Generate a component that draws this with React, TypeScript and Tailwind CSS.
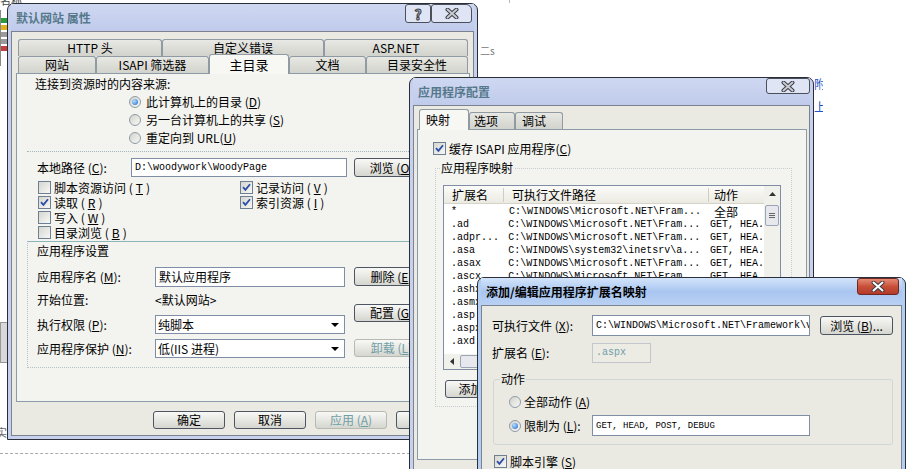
import type { ReactNode } from 'react'

const MONO = "font-['Liberation_Mono',monospace]"

function Key({ text, k, tail = '' }: { text: string; k: string; tail?: string }) {
  return (
    <>
      {text}(<span className="underline">{k}</span>){tail}
    </>
  )
}

function Check({ on }: { on?: boolean }) {
  return (
    <span className="inline-flex h-[13px] w-[13px] shrink-0 items-center justify-center border border-[#6f7f93] bg-linear-to-br from-[#d6d6d0] to-[#f7f7f5]">
      {on && (
        <svg width="9" height="9" viewBox="0 0 9 9">
          <path d="M1 4.2 L3.4 6.8 L8 1.2" fill="none" stroke="#2b4da6" strokeWidth="1.8" />
        </svg>
      )}
    </span>
  )
}

function Radio({ on }: { on?: boolean }) {
  return (
    <span className="inline-flex h-[12px] w-[12px] shrink-0 items-center justify-center rounded-full border border-[#8e9ba7] bg-linear-to-br from-[#d4d4ce] to-[#f7f7f5]">
      {on && <span className="h-[6px] w-[6px] rounded-full bg-[radial-gradient(circle_at_35%_35%,#b4e0ff,#1f66c9)]" />}
    </span>
  )
}

function Btn({ children, disabled, className = '' }: { children?: ReactNode; disabled?: boolean; className?: string }) {
  return (
    <div
      className={`flex shrink-0 items-center justify-center overflow-hidden whitespace-nowrap rounded-[3px] border bg-linear-to-b from-[#f8f8f6] to-[#d6d6d0] ${
        disabled ? 'border-[#b7bab2] text-[#6f9ea6]' : 'border-[#4d5462] text-black'
      } ${className}`}
    >
      {children}
    </div>
  )
}

function Input({ children, className = '', disabled }: { children?: ReactNode; className?: string; disabled?: boolean }) {
  return (
    <div
      className={`flex h-full shrink-0 items-center overflow-hidden whitespace-nowrap border pl-[3px] ${
        disabled ? 'border-[#c3c6cc] bg-[#ecebe4] text-[#6f9ea6]' : 'border-[#7f8ea4] bg-white'
      } ${className}`}
    >
      {children}
    </div>
  )
}

function Select({ children, className = '' }: { children?: ReactNode; className?: string }) {
  return (
    <div className={`flex h-full shrink-0 items-center justify-between border border-[#7f8ea4] bg-white pl-[2px] pr-[5px] ${className}`}>
      <span>{children}</span>
      <svg width="8" height="4" viewBox="0 0 8 4">
        <path d="M0 0 H8 L4 4 Z" fill="#000" />
      </svg>
    </div>
  )
}

function CloseGlyph({ light = '#c9cbd0' }: { light?: string }) {
  return (
    <svg width="14" height="11" viewBox="0 0 14 11">
      <path d="M2.5 1.5 L11.5 9.5 M11.5 1.5 L2.5 9.5" stroke="#3a3d44" strokeWidth="4" strokeLinecap="round" />
      <path d="M2.5 1.5 L11.5 9.5 M11.5 1.5 L2.5 9.5" stroke={light} strokeWidth="2" strokeLinecap="round" />
    </svg>
  )
}

function Win({
  title,
  active,
  buttons,
  className = '',
  children,
}: {
  title: string
  active?: boolean
  buttons: ReactNode
  className?: string
  children: ReactNode
}) {
  return (
    <div
      className={`absolute flex flex-col rounded-t-[7px] border border-[#2a2e38] px-[3px] pb-[3px] ${
        active ? 'bg-[#b3cdf3]' : 'bg-[#c7d1ee]'
      } ${className}`}
    >
      <div
        className={`flex h-[27px] shrink-0 items-center justify-between pl-[5px] ${
          active ? 'bg-linear-to-b from-[#d3e4fb] via-[#a9c6f0] to-[#b9d0f3]' : 'bg-linear-to-b from-[#cfd8f1] to-[#c0cbec]'
        }`}
      >
        <span className={`text-[12px] font-bold ${active ? 'text-black' : 'text-[#55788a]'}`}>{title}</span>
        <div className="flex self-start">{buttons}</div>
      </div>
      <div className="flex flex-1 flex-col border border-[#7b8393] bg-[#eaeae3]">{children}</div>
    </div>
  )
}

function Tab({ label, className = '' }: { label: ReactNode; className?: string }) {
  return (
    <div
      className={`flex h-[17px] shrink-0 items-center justify-center whitespace-nowrap rounded-t-[3px] border border-b-0 border-[#8f9aa3] bg-linear-to-b from-[#e8e8e4] to-[#d3d3cd] ${className}`}
    >
      {label}
    </div>
  )
}

const MS = 'C:\\WINDOWS\\Microsoft.NET\\Fram...'
const rows: [string, string, string][] = [
  ['*', MS, '全部'],
  ['.ad', MS, 'GET, HEA.'],
  ['.adpr...', MS, 'GET, HEA.'],
  ['.asa', 'C:\\WINDOWS\\system32\\inetsrv\\a...', 'GET, HEA.'],
  ['.asax', MS, 'GET, HEA.'],
  ['.ascx', MS, 'GET, HEA.'],
  ['.ashx', MS, 'GET, HEA.'],
  ['.asmx', MS, 'GET, HEA.'],
  ['.asp', 'C:\\WINDOWS\\system32\\inetsrv\\a...', 'GET, HEA.'],
  ['.aspx', MS, 'GET, HEA.'],
  ['.axd', MS, 'GET, HEA.'],
]

export default function App() {
  return (
    <div className="relative h-[469px] w-[910px] overflow-hidden bg-white font-['Noto_Sans_CJK_SC',sans-serif] text-[12px] leading-[14px] text-black">
      {/* desktop leftovers behind the dialogs */}
      <div className="absolute left-0 top-[-7px] text-[11px] text-[#444]">名称</div>
      <div className="absolute left-0 top-[10px] flex h-[56px] w-[8px] flex-col gap-[2px] border-l border-[#888] pt-[8px]">
        <span className="h-[5px] w-[6px] bg-[#2c9a3a]" />
        <span className="h-[5px] w-[6px] bg-[#e0b020]" />
        <span className="h-[5px] w-[6px] bg-[#9a9a9a]" />
        <span className="h-[5px] w-[6px] bg-[#9a9a9a]" />
        <span className="h-[5px] w-[6px] bg-[#c04040]" />
      </div>
      <div className="absolute left-0 top-[322px] h-[41px] w-[8px] border border-[#999] bg-[#d8d8d8]" />
      <div className="absolute left-[-4px] top-[425px] text-[11px] text-[#666]">实</div>
      <div className="absolute left-0 top-[453px] w-[410px] border-t border-dashed border-[#aaa]" />
      <div className="absolute left-[480px] top-[44px] text-[10px] text-[#777]">二s</div>
      <div className="absolute left-[509px] top-0 h-[3px] border-l border-[#bbb]" />
      <div className="absolute left-[814px] top-[77px] w-[9px] overflow-hidden text-[12px] text-[#1f55c8]">附</div>
      <div className="absolute left-[814px] top-[100px] w-[9px] overflow-hidden text-[12px] text-[#1f55c8]">上</div>

      {/* 默认网站 属性 */}
      <Win
        title="默认网站 属性"
        className="left-[7px] top-[3px] h-[437px] w-[471px]"
        buttons={
          <div className="flex pr-[2px]">
            <div className="flex h-[19px] w-[26px] items-center justify-center rounded-[3px] border border-[#4a4f5a] bg-[#dfe5f5] text-[14px] font-bold text-[#c9cbd0] [-webkit-text-stroke:1px_#3a3d44]">
              ?
            </div>
            <div className="flex h-[19px] w-[41px] items-center justify-center rounded-[3px] rounded-tr-[6px] border border-[#4a4f5a] bg-[#dfe5f5]">
              <CloseGlyph />
            </div>
          </div>
        }
      >
        <div className="ml-[6px] mt-[7px] flex">
          <Tab label="HTTP 头" className="w-[144px]" />
          <Tab label="自定义错误" className="w-[162px]" />
          <Tab label="ASP.NET" className="w-[144px]" />
        </div>
        <div className="ml-[6px] flex h-[17px] items-end">
          <Tab label="网站" className="w-[78px]" />
          <Tab label="ISAPI 筛选器" className="w-[113px]" />
          <div className="relative z-10 -mb-px flex h-[20px] w-[80px] shrink-0 items-center justify-center rounded-t-[3px] border border-b-0 border-[#8f9aa3] bg-[#f7f7f4] text-[13px]">
            主目录
          </div>
          <Tab label="文档" className="w-[77px]" />
          <Tab label="目录安全性" className="w-[102px]" />
        </div>
        <div className="ml-[4px] flex h-[329px] w-[454px] flex-col overflow-hidden border border-[#8c9ba8] bg-[#f3f3ef]">
          <div className="ml-[18px] mt-[3px] h-[14px]">连接到资源时的内容来源:</div>
          <div className="ml-[112px] mt-[2px] flex flex-col">
            <div className="flex h-[18px] items-center gap-[5px]">
              <Radio on />
              <span><Key text="此计算机上的目录 " k="D" /></span>
            </div>
            <div className="flex h-[18px] items-center gap-[5px]">
              <Radio />
              <span><Key text="另一台计算机上的共享 " k="S" /></span>
            </div>
            <div className="flex h-[18px] items-center gap-[5px]">
              <Radio />
              <span><Key text="重定向到 URL" k="U" /></span>
            </div>
          </div>
          <div className="ml-[10px] mt-[4px] border-t border-dotted border-[#a3b7be]" />
          <div className="mt-[6px] flex h-[19px] items-center">
            <span className="ml-[20px] w-[94px] shrink-0"><Key text="本地路径 " k="C" tail=":" /></span>
            <Input className={`w-[216px] ${MONO} text-[10px]`}>D:\woodywork\WoodyPage</Input>
            <Btn className="ml-[7px] h-full w-[75px]"><Key text="浏览 " k="O" /></Btn>
          </div>
          <div className="ml-[21px] mt-[3px] grid grid-cols-[202px_auto]">
            <div className="flex h-[15px] items-center gap-[3px]"><Check /><Key text="脚本资源访问 " k="T" /></div>
            <div className="flex h-[15px] items-center gap-[3px]"><Check on /><Key text="记录访问 " k="V" /></div>
            <div className="flex h-[15px] items-center gap-[3px]"><Check on /><Key text="读取 " k="R" /></div>
            <div className="flex h-[15px] items-center gap-[3px]"><Check on /><Key text="索引资源 " k="I" /></div>
            <div className="flex h-[15px] items-center gap-[3px]"><Check /><Key text="写入 " k="W" /></div>
            <div />
            <div className="flex h-[15px] items-center gap-[3px]"><Check /><Key text="目录浏览 " k="B" /></div>
            <div />
          </div>
          <div className="ml-[10px] mt-[1px] flex w-[460px] border border-dotted border-[#b4c3c8] [border-right-style:none] [border-top-color:#8ab6ba] [border-top-style:solid]">
            <div className="ml-[9px] flex flex-col">
              <div className="mt-[2px] h-[14px]">应用程序设置</div>
              <div className="mt-[9px] flex h-[20px] items-center">
                <span className="w-[118px]"><Key text="应用程序名 " k="M" tail=":" /></span>
                <Input className="w-[190px]">默认应用程序</Input>
              </div>
              <div className="mt-[6px] flex h-[14px] items-center">
                <span className="w-[118px]">开始位置:</span>
                <span>&lt;默认网站&gt;</span>
              </div>
              <div className="mt-[8px] flex h-[19px] items-center">
                <span className="w-[118px]"><Key text="执行权限 " k="P" tail=":" /></span>
                <Select className="w-[190px]">纯脚本</Select>
              </div>
              <div className="mt-[5px] mb-[9px] flex h-[19px] items-center">
                <span className="w-[118px]"><Key text="应用程序保护 " k="N" tail=":" /></span>
                <Select className="w-[190px]">低(IIS 进程)</Select>
              </div>
            </div>
            <div className="ml-[9px] flex flex-col">
              <Btn className="mt-[25px] h-[19px] w-[75px]"><Key text="删除 " k="E" /></Btn>
              <Btn className="mt-[18px] h-[18px] w-[75px]"><Key text="配置 " k="G" /></Btn>
              <Btn disabled className="mt-[17px] h-[18px] w-[75px]"><Key text="卸载 " k="L" /></Btn>
            </div>
          </div>
        </div>
        <div className="mt-[9px] flex gap-[9px] pl-[141px]">
          <Btn className="h-[18px] w-[72px]">确定</Btn>
          <Btn className="h-[18px] w-[72px]">取消</Btn>
          <Btn disabled className="h-[18px] w-[72px]"><Key text="应用 " k="A" /></Btn>
          <Btn className="h-[18px] w-[72px]">帮助</Btn>
        </div>
      </Win>

      {/* 应用程序配置 */}
      <Win
        title="应用程序配置"
        className="left-[409px] top-[77px] h-[400px] w-[405px]"
        buttons={
          <div className="flex h-[16px] w-[44px] items-center justify-center rounded-[3px] border border-[#4a4f5a] bg-[#dfe5f5]">
            <CloseGlyph />
          </div>
        }
      >
        <div className="ml-[5px] mt-[3px] flex h-[20px] items-end">
          <div className="relative z-10 -mb-px flex h-[21px] w-[50px] shrink-0 items-center rounded-t-[3px] border border-b-0 border-[#8f9aa3] bg-[#f7f7f4] pl-[6px]">
            映射
          </div>
          <Tab label="选项" className="w-[46px] justify-start pl-[4px]" />
          <Tab label="调试" className="w-[48px] justify-start pl-[6px]" />
        </div>
        <div className="ml-[3px] flex h-[331px] w-[390px] flex-col overflow-hidden border border-[#8c9ba8] bg-[#f3f3ef]">
          <div className="ml-[15px] mt-[11px] flex h-[15px] items-center gap-[3px]">
            <Check on />
            <span><Key text="缓存 ISAPI 应用程序" k="C" /></span>
          </div>
          <fieldset className="ml-[17px] mt-[5px] w-[357px] border border-dotted border-[#c6ced2] pb-[8px]">
            <legend className="ml-[4px] h-[14px] px-[1px]">应用程序映射</legend>
            <div className="ml-[7px] mt-[10px] flex h-[185px] w-[338px] flex-col border border-[#7f8ea4] bg-white">
              <div className="flex min-h-0 flex-1">
                <div className="flex-1 overflow-hidden">
                  <div className="mb-[1px] flex h-[18px] items-center border-b border-[#d6d3c8] bg-linear-to-b from-[#fbfbf9] to-[#ebeae2]">
                    <span className="w-[60px] border-r border-[#cfcdc3] pl-[8px]">扩展名</span>
                    <span className="w-[205px] border-r border-[#cfcdc3] pl-[8px]">可执行文件路径</span>
                    <span className="pl-[5px]">动作</span>
                  </div>
                  {rows.map(([ext, path, act], i) => (
                    <div key={i} className={`flex h-[13px] items-center whitespace-nowrap ${MONO} text-[10px] leading-[13px]`}>
                      <span className="w-[60px] overflow-hidden pl-[7px]">{ext}</span>
                      <span className="w-[205px] overflow-hidden pl-[5px]">{path}</span>
                      {act === '全部' ? (
                        <span className="pl-[5px] font-['Noto_Sans_CJK_SC',sans-serif] text-[12px] leading-[13px]">{act}</span>
                      ) : (
                        <span className="pl-[5px]">{act}</span>
                      )}
                    </div>
                  ))}
                </div>
                <div className="flex w-[16px] flex-col items-center bg-[#f1f1ec]">
                  <div className="flex h-[16px] w-full items-center justify-center">
                    <svg width="7" height="4" viewBox="0 0 7 4"><path d="M0 4 L3.5 0 L7 4 Z" fill="#333" /></svg>
                  </div>
                  <div className="mt-[3px] flex h-[21px] w-[14px] flex-col items-center justify-center gap-[1px] rounded-[2px] border border-[#9aa5b5] bg-[#e6e8ee]">
                    <span className="h-px w-[6px] bg-[#666]" />
                    <span className="h-px w-[6px] bg-[#666]" />
                    <span className="h-px w-[6px] bg-[#666]" />
                  </div>
                </div>
              </div>
              <div className="flex h-[15px] items-center bg-[#f1f1ec]">
                <div className="flex w-[16px] items-center justify-center">
                  <svg width="4" height="7" viewBox="0 0 4 7"><path d="M4 0 L0 3.5 L4 7 Z" fill="#333" /></svg>
                </div>
                <div className="h-[13px] w-[90px] rounded-[2px] border border-[#9aa5b5] bg-[#e6e8ee]" />
              </div>
            </div>
            <Btn className="ml-[9px] mt-[10px] h-[18px] w-[80px]"><Key text="添加 " k="D" tail="..." /></Btn>
          </fieldset>
        </div>
      </Win>

      {/* 添加/编辑应用程序扩展名映射 */}
      <Win
        active
        title="添加/编辑应用程序扩展名映射"
        className="left-[477px] top-[277px] h-[200px] w-[429px]"
        buttons={
          <div className="mr-[3px] flex h-[17px] w-[42px] items-center justify-center rounded-[3px] border border-[#6e2a22] bg-linear-to-b from-[#e58a74] via-[#c8503a] to-[#b23a28]">
            <CloseGlyph light="#ffffff" />
          </div>
        }
      >
        <div className="mt-[9px] flex h-[21px] items-center">
          <span className="ml-[10px] w-[100px] shrink-0"><Key text="可执行文件 " k="X" tail=":" /></span>
          <Input className={`w-[218px] ${MONO} text-[10px]`}>C:\WINDOWS\Microsoft.NET\Framework\v</Input>
          <Btn className="ml-[10px] h-[19px] w-[73px]"><Key text="浏览 " k="B" tail="..." /></Btn>
        </div>
        <div className="mt-[7px] flex h-[20px] items-center">
          <span className="ml-[10px] w-[100px] shrink-0"><Key text="扩展名 " k="E" tail=":" /></span>
          <Input disabled className={`w-[59px] ${MONO} text-[10px]`}>.aspx</Input>
        </div>
        <fieldset className="ml-[11px] mt-[9px] w-[400px] rounded-[3px] border border-[#d0d6d6] pb-[8px]">
          <legend className="ml-[6px] h-[14px] px-[1px]">动作</legend>
          <div className="ml-[15px] mt-[9px] flex h-[14px] items-center gap-[3px]">
            <Radio />
            <span><Key text="全部动作 " k="A" /></span>
          </div>
          <div className="ml-[15px] mt-[6px] flex h-[21px] items-center">
            <Radio on />
            <span className="ml-[3px] w-[68px]"><Key text="限制为 " k="L" tail=":" /></span>
            <Input className={`w-[218px] ${MONO} text-[9px]`}>GET, HEAD, POST, DEBUG</Input>
          </div>
        </fieldset>
        <div className="ml-[12px] mt-[9px] flex h-[15px] items-center gap-[3px]">
          <Check on />
          <span><Key text="脚本引擎 " k="S" /></span>
        </div>
      </Win>
    </div>
  )
}
